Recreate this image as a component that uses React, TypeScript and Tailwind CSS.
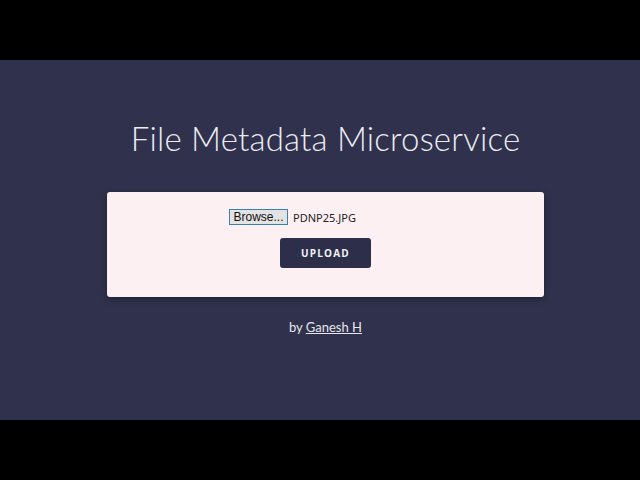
export default function App() {
  return (
    <div className="flex h-[480px] w-[640px] flex-col bg-black">
      <div className="h-[60px]" />
      <main className="flex h-[360px] flex-col items-center bg-[#30324d] pl-[11px]">
        {/* Title */}
        <h1
          className="mt-[55px] text-[33px] font-light leading-[46px] tracking-[0.2px] text-[#ecebf2]"
          style={{ fontFamily: 'Lato, "Open Sans", sans-serif' }}
        >
          File Metadata Microservice
        </h1>

        {/* Upload card */}
        <div className="mt-[31px] flex h-[105px] w-[437px] flex-col items-center rounded-[3px] bg-[#fdf0f3] shadow-[0_2px_6px_rgba(0,0,0,0.35)]">
          <div className="mt-[17px] flex w-[193px] items-center text-[#222]">
            <span
              className="flex h-[16px] w-[59px] items-center justify-center border border-[#3c7fb1] bg-[#e3e3e3] text-[12px] leading-none text-[#111]"
              style={{ fontFamily: '"Liberation Sans", Arial, sans-serif' }}
            >
              Browse...
            </span>
            <span
              className="ml-[5px] text-[11px] leading-none"
              style={{ fontFamily: '"Noto Sans", "Open Sans", sans-serif' }}
            >
              PDNP25.JPG
            </span>
          </div>
          <button
            className="mt-[13px] h-[30px] w-[91px] rounded-[3px] bg-[#2d2f4a] text-[10px] font-bold tracking-[1.2px] text-[#f1f1f5]"
            style={{ fontFamily: '"Open Sans", sans-serif' }}
          >
            UPLOAD
          </button>
        </div>

        {/* Footer */}
        <p
          className="mt-[21px] text-[13px] text-[#e6e6ee]"
          style={{ fontFamily: 'Lato, "Open Sans", sans-serif' }}
        >
          by <a className="underline">Ganesh H</a>
        </p>
      </main>
      <div className="h-[60px]" />
    </div>
  );
}
